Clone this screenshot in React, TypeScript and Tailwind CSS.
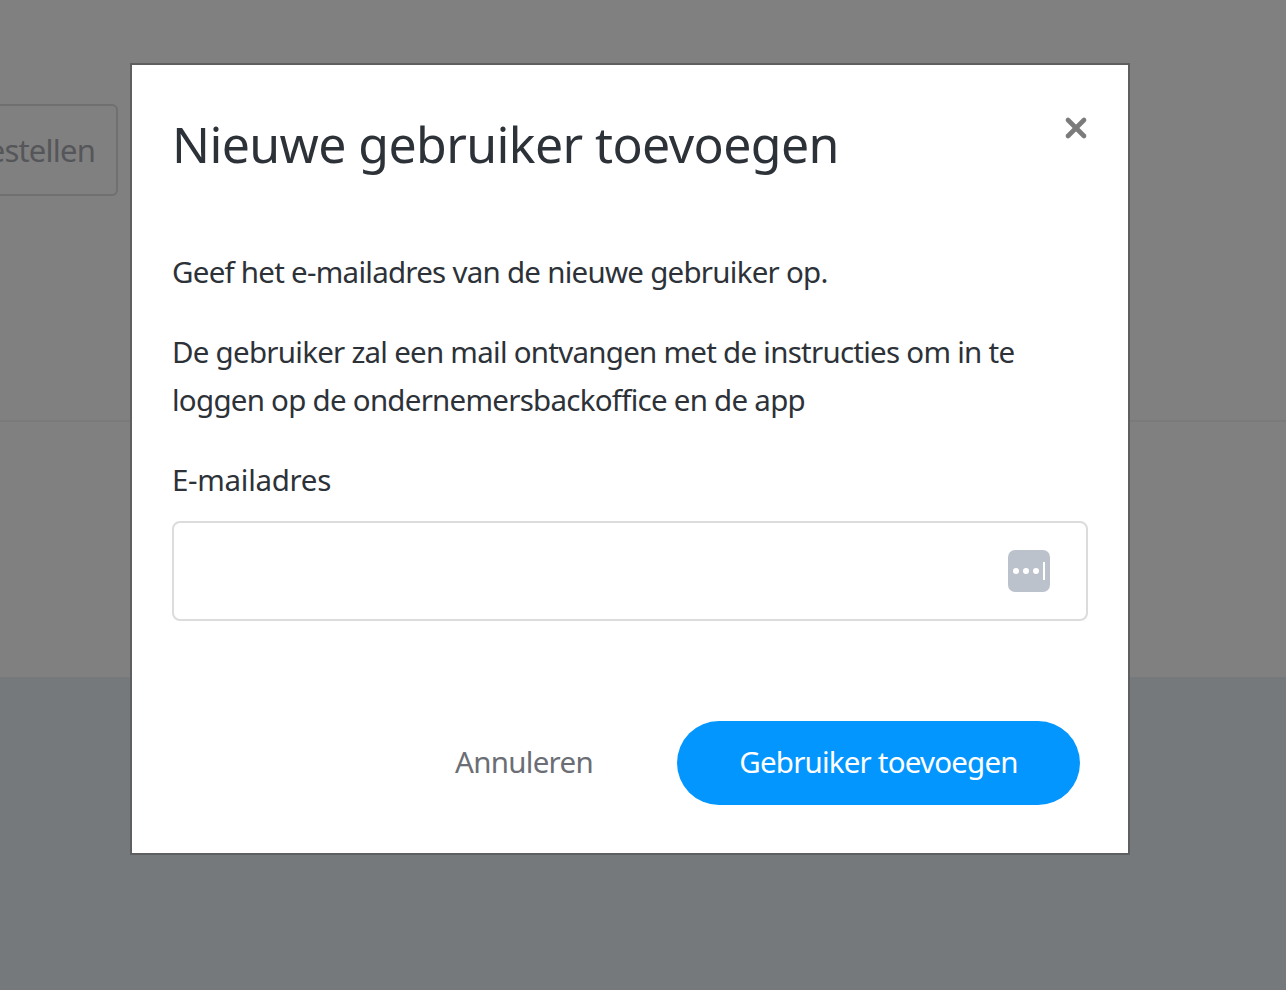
import { X } from 'lucide-react'

const FONT = "font-['Noto_Sans','Open_Sans',sans-serif]"

function PasswordKeyIcon() {
  return (
    <svg width="42" height="42" viewBox="0 0 42 42" aria-hidden="true">
      <rect width="42" height="42" rx="7" fill="#bcc2cc" />
      <circle cx="8" cy="21" r="3" fill="#fff" />
      <circle cx="18" cy="21" r="3" fill="#fff" />
      <circle cx="28" cy="21" r="3" fill="#fff" />
      <rect x="35" y="12" width="2" height="18" fill="#fff" />
    </svg>
  )
}

// Dimmed page behind the dialog
function Backdrop() {
  return (
    <div className="flex h-[990px] flex-col overflow-hidden bg-[#75797c]">
      <div className="h-[677px] shrink-0 bg-[#808080]">
        <div className="h-[422px] border-b-2 border-[#7a7a7a] pt-[104px]">
          <div className="flex h-[92px] w-[118px] items-center justify-end overflow-hidden rounded-r-md border-2 border-l-0 border-[#707070] pr-[21px]">
            <span className="whitespace-nowrap text-[31px] tracking-[-0.8px] text-[#555659]">estellen</span>
          </div>
        </div>
      </div>
    </div>
  )
}

function Dialog() {
  return (
    <div className="absolute inset-0 pl-[130px] pt-[63px]">
      <div className="flex h-[792px] w-[1000px] flex-col border-2 border-[#5e5f61] bg-white pl-[40px] pr-[40px] text-[#2d3239]">
        <div className="flex items-start justify-between pt-[47px]">
          <h1 className="text-[50px] leading-[64px] tracking-[-0.6px]">Nieuwe gebruiker toevoegen</h1>
          <X className="mr-[-4px] size-[32px] text-[#7b7b7b]" strokeWidth={3.5} />
        </div>
        <p className="mt-[72px] text-[29.5px] leading-[48px] tracking-[-0.74px]">
          Geef het e-mailadres van de nieuwe gebruiker op.
        </p>
        <p className="mt-[32px] text-[29.5px] leading-[48px] tracking-[-0.74px]">
          De gebruiker zal een mail ontvangen met de instructies om in te
          <br />
          loggen op de ondernemersbackoffice en de app
        </p>
        <label className="mt-[32px] text-[29.5px] leading-[48px] tracking-[-0.3px]">E-mailadres</label>
        <div className="mt-[17px] flex h-[100px] items-center justify-end rounded-lg border-2 border-[#dcdcdc] pr-[36px]">
          <PasswordKeyIcon />
        </div>
        <div className="mt-[100px] flex items-center justify-end gap-[84px] pr-[8px]">
          <button className="pb-[2px] text-[29.5px] tracking-[-0.7px] text-[#6b6e75]">Annuleren</button>
          <button className="h-[84px] w-[403px] rounded-full bg-[#0496ff] pb-[2px] text-[29.5px] tracking-[-0.8px] text-white">
            Gebruiker toevoegen
          </button>
        </div>
      </div>
    </div>
  )
}

export default function App() {
  return (
    <div className={`relative h-[990px] overflow-hidden ${FONT}`}>
      <Backdrop />
      <Dialog />
    </div>
  )
}
